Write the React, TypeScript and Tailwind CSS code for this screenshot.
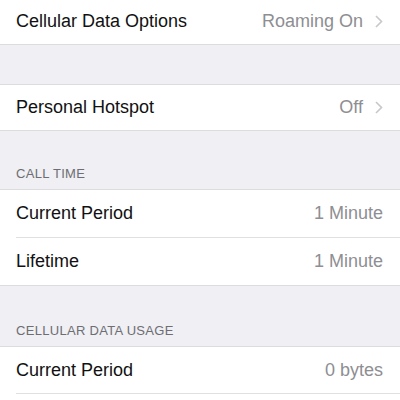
import { ReactNode } from 'react'

const font = { fontFamily: '"Liberation Sans", Arial, sans-serif' }

function Chevron() {
  return (
    <svg width="8" height="13" viewBox="0 0 8 13" className="ml-[12px]">
      <path d="M1 1l5.5 5.5L1 12" fill="none" stroke="#c7c7cc" strokeWidth="1.6" />
    </svg>
  )
}

function Row({
  label,
  value,
  chevron,
  divider,
  h = 'h-[47px]',
}: {
  label: string
  value: string
  chevron?: boolean
  divider?: boolean
  h?: string
}) {
  return (
    <div className="pl-[16px] bg-white">
      <div
        className={`${h} flex items-center pr-[17px] ${divider ? 'border-b border-[#e0e0e4]' : ''}`}
      >
        <span className="text-[18px] text-[#111] flex-1">{label}</span>
        <span className="text-[18px] text-[#8e8e93]">{value}</span>
        {chevron && <Chevron />}
      </div>
    </div>
  )
}

function Group({ children }: { children: ReactNode }) {
  return <div className="border-y border-[#dcdce0]">{children}</div>
}

function Header({ title, h }: { title: string; h: string }) {
  return (
    <div className={`${h} flex items-end px-[16px] pb-[6px]`}>
      <span className="text-[13px] text-[#6d6d72] tracking-[0.3px]">{title}</span>
    </div>
  )
}

export default function App() {
  return (
    <div className="w-[400px] h-[400px] overflow-hidden bg-[#efeff4]" style={font}>
      <div className="-mt-[2px] border-b border-[#dcdce0]">
        <Row label="Cellular Data Options" value="Roaming On" chevron h="h-[46px]" />
      </div>
      <div className="h-[39px]" />
      <Group>
        <Row label="Personal Hotspot" value="Off" chevron h="h-[45px]" />
      </Group>
      <Header title="CALL TIME" h="h-[58px]" />
      <Group>
        <Row label="Current Period" value="1 Minute" divider h="h-[48px]" />
        <Row label="Lifetime" value="1 Minute" />
      </Group>
      <Header title="CELLULAR DATA USAGE" h="h-[60px]" />
      <div className="border-t border-[#dcdce0] bg-white">
        <Row label="Current Period" value="0 bytes" divider />
        <div className="h-[20px]" />
      </div>
    </div>
  )
}
